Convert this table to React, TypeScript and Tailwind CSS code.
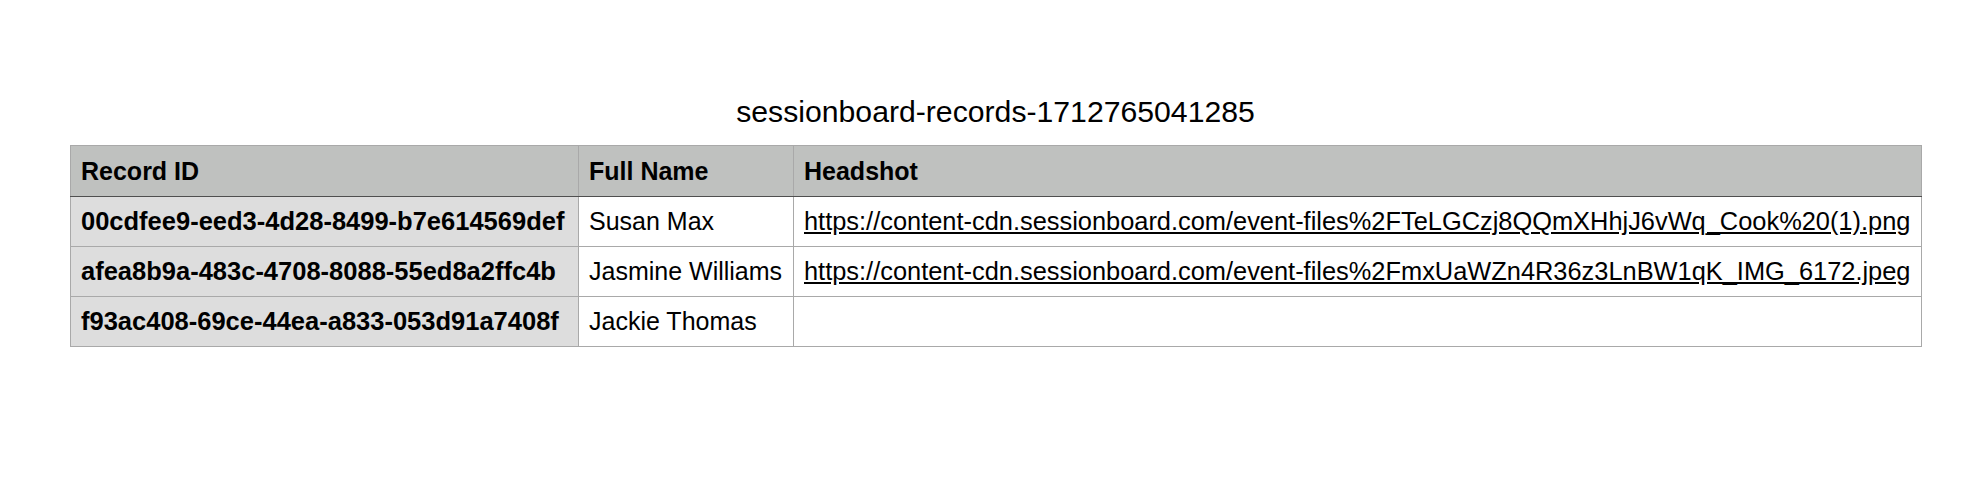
import React from 'react';

interface RecordRow {
  id: string;
  name: string;
  headshot?: string;
}

const rows: RecordRow[] = [
  {
    id: '00cdfee9-eed3-4d28-8499-b7e614569def',
    name: 'Susan Max',
    headshot: 'https://content-cdn.sessionboard.com/event-files%2FTeLGCzj8QQmXHhjJ6vWq_Cook%20(1).png',
  },
  {
    id: 'afea8b9a-483c-4708-8088-55ed8a2ffc4b',
    name: 'Jasmine Williams',
    headshot: 'https://content-cdn.sessionboard.com/event-files%2FmxUaWZn4R36z3LnBW1qK_IMG_6172.jpeg',
  },
  {
    id: 'f93ac408-69ce-44ea-a833-053d91a7408f',
    name: 'Jackie Thomas',
  },
];

const App: React.FC = () => {
  return (
    <div className="w-[1968px] h-[492px] bg-white text-black font-['Liberation_Sans',Arial,sans-serif] pt-[94px] pl-[70px]">
      <div className="w-[1851px]">
        {/* Title */}
        <h1 className="text-center text-[30.2px] leading-[36px] h-[36px] mb-[15px]">
          sessionboard-records-1712765041285
        </h1>

        {/* Records table */}
        <table className="w-[1851px] border-collapse table-fixed text-[25px] leading-[29px]">
          <colgroup>
            <col className="w-[508px]" />
            <col className="w-[215px]" />
            <col className="w-[1128px]" />
          </colgroup>
          <thead>
            <tr className="bg-[#bfc1bf] h-[51px]">
              <th className="text-left font-bold pl-[10px] pr-[6px] border border-[#a9a9a9] border-b-[#4f4f4f]">Record ID</th>
              <th className="text-left font-bold px-[10px] border border-[#a9a9a9] border-b-[#4f4f4f]">Full Name</th>
              <th className="text-left font-bold px-[10px] border border-[#a9a9a9] border-b-[#4f4f4f]">Headshot</th>
            </tr>
          </thead>
          <tbody>
            {rows.map(row => (
              <tr key={row.id} className="h-[50px]">
                <td className="bg-[#dddddd] font-bold text-[25.5px] pl-[10px] pr-[6px] border border-[#a9a9a9] whitespace-nowrap">{row.id}</td>
                <td className="px-[10px] border border-[#a9a9a9] whitespace-nowrap">{row.name}</td>
                <td className="px-[10px] border border-[#a9a9a9] whitespace-nowrap text-[25.4px]">
                  {row.headshot && (
                    <a href={row.headshot} className="underline text-black">
                      {row.headshot}
                    </a>
                  )}
                </td>
              </tr>
            ))}
          </tbody>
        </table>
      </div>
    </div>
  );
};

export default App;
